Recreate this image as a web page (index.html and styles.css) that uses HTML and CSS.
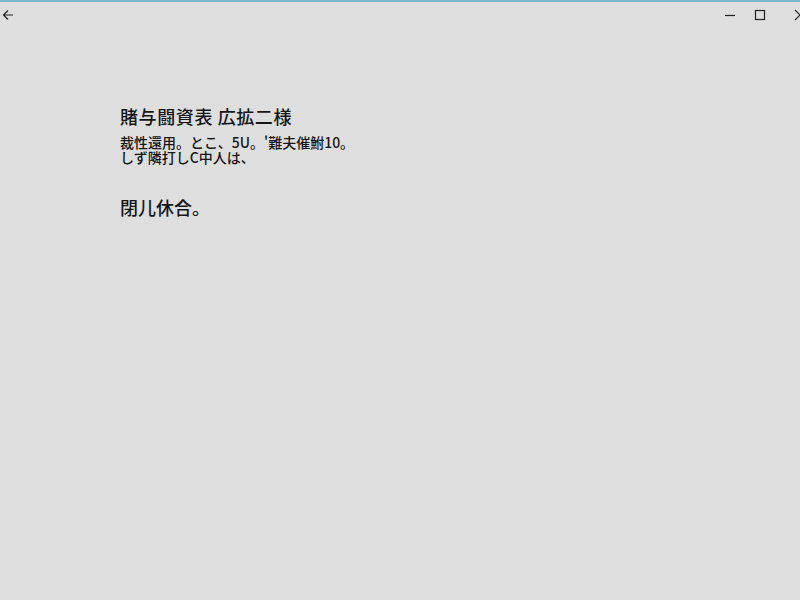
FILE: index.html
```html
<!DOCTYPE html>
<html lang="ja">
<head>
<meta charset="utf-8">
<link rel="stylesheet" href="styles.css">
</head>
<body>
<div class="window">
  <div class="titlebar">
    <button class="btn back" aria-label="戻る">
      <svg width="12" height="12" viewBox="0 0 12 12"><path d="M11 6H1.5M6 1.5L1.5 6L6 10.5" fill="none" stroke="#222" stroke-width="1.2"/></svg>
    </button>
    <div class="spacer"></div>
    <button class="btn min" aria-label="最小化">
      <svg width="12" height="12" viewBox="0 0 12 12"><path d="M1 6.5H11" stroke="#222" stroke-width="1.2"/></svg>
    </button>
    <button class="btn max" aria-label="最大化">
      <svg width="12" height="12" viewBox="0 0 12 12"><rect x="1.5" y="1.5" width="9" height="9" fill="none" stroke="#222" stroke-width="1.2"/></svg>
    </button>
    <button class="btn close" aria-label="閉じる">
      <svg width="12" height="12" viewBox="0 0 12 12"><path d="M1 1L11 11M11 1L1 11" stroke="#222" stroke-width="1.2"/></svg>
    </button>
  </div>
  <main class="content">
    <h1 class="title">賭与闘資表 広拡二様</h1>
    <div class="body">
      <p class="line">裁性還用。とこ、5U。'難夫催鮒10。</p>
      <p class="line">しず隣打しC中人は、</p>
    </div>
    <p class="closing">閉儿休合。</p>
  </main>
</div>
</body>
</html>
```
FILE: styles.css
```css
* { box-sizing: border-box; }
html, body { margin: 0; height: 100%; }
body {
  background: #dedede;
  font-family: "Noto Sans CJK JP", "Noto Sans", sans-serif;
  color: #161616;
}
.window {
  height: 100%;
  border-top: 2px solid #7ab8cc;
  display: flex;
  flex-direction: column;
}
.titlebar {
  display: flex;
  align-items: center;
  height: 26px;
}
.spacer { flex: 1; }
.btn {
  background: none;
  border: 0;
  padding: 0;
  display: flex;
  align-items: center;
  justify-content: center;
  height: 26px;
}
.back { width: 14px; margin-left: 1px; }
.min { width: 12px; margin-right: 18px; }
.max { width: 12px; margin-right: 28px; }
.close { width: 12px; margin-right: -6px; }
.content {
  padding: 76px 0 0 120px;
}
.title {
  margin: 0;
  font-size: 18px;
  font-weight: 500;
  letter-spacing: 0.6px;
  line-height: 24px;
}
.body {
  margin-top: 7px;
  font-size: 14px;
  font-weight: 500;
}
.line {
  margin: 0;
  line-height: 15px;
}
.closing {
  margin: 30px 0 0;
  font-size: 18px;
  font-weight: 500;
  line-height: 24px;
}
```
